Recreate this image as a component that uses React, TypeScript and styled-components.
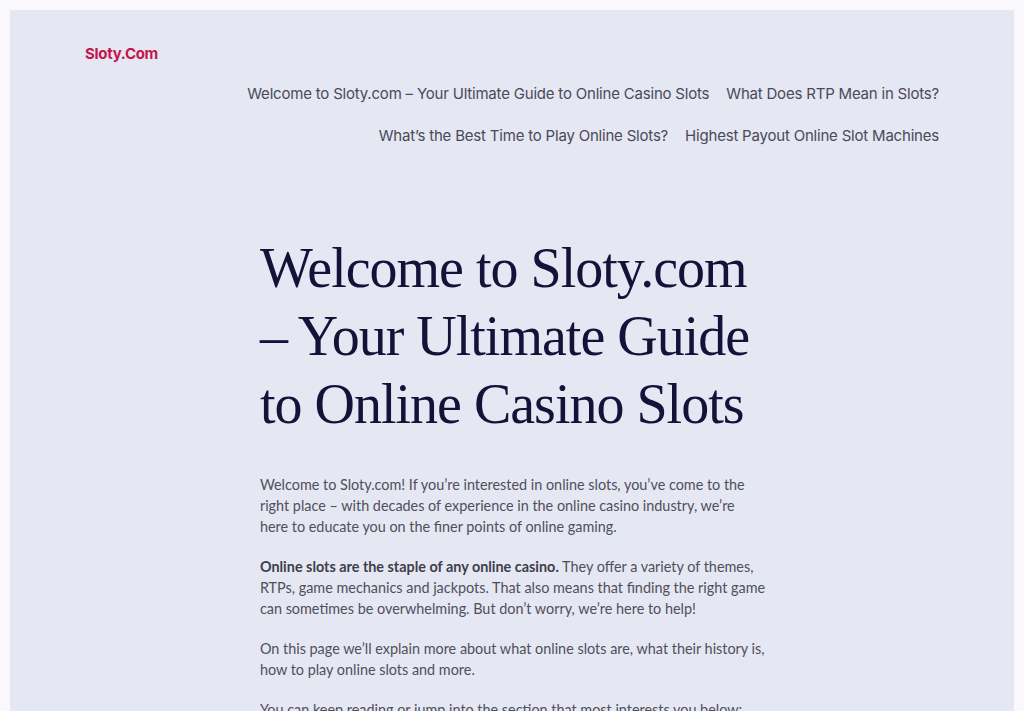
import React from "react";
import styled, { createGlobalStyle } from "styled-components";

const GlobalStyle = createGlobalStyle`
  html, body {
    margin: 0;
    padding: 0;
    background: #f9f9fb;
  }
  body {
    font-family: "Inter", "Noto Sans", sans-serif;
  }
`;

const navLinks = [
  "Welcome to Sloty.com – Your Ultimate Guide to Online Casino Slots",
  "What Does RTP Mean in Slots?",
  "What’s the Best Time to Play Online Slots?",
  "Highest Payout Online Slot Machines",
];

const App = () => (
  <>
    <GlobalStyle />
    <Page>
      <Panel>
        <Header>
          <Logo href="#">Sloty.Com</Logo>
          <Nav>
            {navLinks.map((l) => (
              <NavLink key={l} href="#">
                {l}
              </NavLink>
            ))}
          </Nav>
        </Header>
        <Main>
          <Title>Welcome to Sloty.com – Your Ultimate Guide to Online Casino Slots</Title>
          <Body>
            Welcome to Sloty.com! If you’re interested in online slots, you’ve come to the right
            place – with decades of experience in the online casino industry, we’re here to
            educate you on the finer points of online gaming.
          </Body>
          <Body>
            <b>Online slots are the staple of any online casino.</b> They offer a variety of
            themes, RTPs, game mechanics and jackpots. That also means that finding the right game
            can sometimes be overwhelming. But don’t worry, we’re here to help!
          </Body>
          <Body>
            On this page we’ll explain more about what online slots are, what their history is,
            how to play online slots and more.
          </Body>
          <Body>You can keep reading or jump into the section that most interests you below:</Body>
        </Main>
      </Panel>
    </Page>
  </>
);

const Page = styled.div`
  padding: 10px 10px 0;
  height: 711px;
  box-sizing: border-box;
  overflow: hidden;
`;

const Panel = styled.div`
  background: #e5e7f3;
  min-height: 100%;
  padding: 32px 75px 0;
`;

const Header = styled.header`
  display: flex;
  justify-content: space-between;
  align-items: flex-start;
  gap: 40px;
`;

const Logo = styled.a`
  font-family: "Inter", sans-serif;
  font-weight: 700;
  font-size: 15px;
  color: #c4164c;
  text-decoration: none;
  letter-spacing: -0.3px;
  line-height: 22px;
  padding-top: 1px;
  white-space: nowrap;
`;

const Nav = styled.nav`
  display: flex;
  flex-wrap: wrap;
  justify-content: flex-end;
  column-gap: 17px;
  row-gap: 20px;
  max-width: 700px;
  padding-top: 41px;
`;

const NavLink = styled.a`
  font-family: "Inter", sans-serif;
  font-size: 15px;
  line-height: 22px;
  color: #4a4a58;
  text-decoration: none;
  letter-spacing: -0.2px;
  white-space: nowrap;
`;

const Main = styled.main`
  width: 506.2px;
  margin: 87px auto 0;
  padding-left: 2px;
`;

const Title = styled.h1`
  font-family: "Liberation Serif", "DejaVu Serif", serif;
  font-weight: 400;
  font-size: 56px;
  line-height: 68px;
  color: #17113a;
  margin: 0 0 36px;
  letter-spacing: -1px;
`;

const Body = styled.p`
  font-family: "Lato", sans-serif;
  font-size: 14.4px;
  line-height: 21px;
  color: #50505c;
  margin: 0 0 19px;
  b {
    font-weight: 700;
    color: #3e3e4a;
  }
`;

export default App;
